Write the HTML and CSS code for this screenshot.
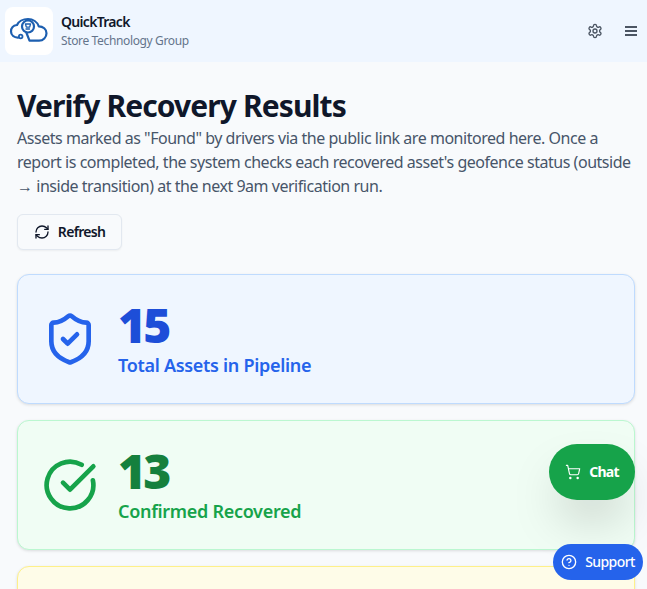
FILE: index.html
```html
<!DOCTYPE html>
<html lang="en">
<head>
<meta charset="utf-8">
<title>QuickTrack</title>
<link rel="stylesheet" href="styles.css">
</head>
<body>
<header class="topbar">
  <div class="brand">
    <div class="logo">
      <svg width="40" height="30" viewBox="0 0 40 30" fill="none" stroke="#1d5fb0" stroke-width="2.200" stroke-linecap="round" stroke-linejoin="round">
        <path d="M9.800 21.500C5 22 2 19 2 15.500c0-3.500 2.500-6 6-6.500C9.500 5.500 14 3 19 3c5 0 9.300 3 10.800 7.300 4.200 0 7.700 3 7.700 6.900 0 4-3.300 7.500-7.500 7.500H20.500L17.500 17"/>
        <circle cx="19" cy="10.500" r="6"/>
        <path d="M16.500 8h5l-.8 3.200h-3.400zM17 13h3.500" stroke-width="1.300"/>
        <circle cx="11.700" cy="20.500" r="1.800" stroke-width="1.800"/>
      </svg>
    </div>
    <div class="brand-text">
      <div class="brand-name">QuickTrack</div>
      <div class="brand-sub">Store Technology Group</div>
    </div>
  </div>
  <div class="top-actions">
    <svg class="gear" width="16" height="16" viewBox="0 0 24 24" fill="none" stroke="#4b5563" stroke-width="2" stroke-linecap="round" stroke-linejoin="round">
      <path d="M12.220 2h-.44a2 2 0 0 0-2 2v.18a2 2 0 0 1-1 1.730l-.43.25a2 2 0 0 1-2 0l-.15-.08a2 2 0 0 0-2.730.73l-.22.38a2 2 0 0 0 .73 2.730l.15.1a2 2 0 0 1 1 1.720v.51a2 2 0 0 1-1 1.740l-.15.09a2 2 0 0 0-.73 2.730l.22.38a2 2 0 0 0 2.730.73l.15-.08a2 2 0 0 1 2 0l.43.25a2 2 0 0 1 1 1.730V20a2 2 0 0 0 2 2h.44a2 2 0 0 0 2-2v-.18a2 2 0 0 1 1-1.730l.43-.25a2 2 0 0 1 2 0l.15.08a2 2 0 0 0 2.730-.73l.22-.39a2 2 0 0 0-.73-2.730l-.15-.08a2 2 0 0 1-1-1.740v-.5a2 2 0 0 1 1-1.740l.15-.09a2 2 0 0 0 .73-2.730l-.22-.38a2 2 0 0 0-2.730-.73l-.15.08a2 2 0 0 1-2 0l-.43-.25a2 2 0 0 1-1-1.730V4a2 2 0 0 0-2-2z"/>
      <circle cx="12" cy="12" r="3"/>
    </svg>
    <svg width="14" height="12" viewBox="0 0 14 12" fill="#4b5563"><rect x="1" y="1" width="12" height="2"/><rect x="1" y="5" width="12" height="2"/><rect x="1" y="9" width="12" height="2"/></svg>
  </div>
</header>
<main class="content">
  <h1 class="title">Verify Recovery Results</h1>
  <p class="intro">Assets marked as "Found" by drivers via the public link are monitored here. Once a report is completed, the system checks each recovered asset's geofence status (outside → inside transition) at the next 9am verification run.</p>
  <button class="refresh" type="button">
    <svg width="16" height="16" viewBox="0 0 24 24" fill="none" stroke="#0f172a" stroke-width="2" stroke-linecap="round" stroke-linejoin="round">
      <path d="M3 12a9 9 0 0 1 9-9 9.750 9.750 0 0 1 6.740 2.740L21 8"/><path d="M21 3v5h-5"/><path d="M21 12a9 9 0 0 1-9 9 9.750 9.750 0 0 1-6.740-2.740L3 16"/><path d="M8 16H3v5"/>
    </svg>
    <span class="btn-text">Refresh</span>
  </button>
  <section class="cards">
    <article class="card card-blue">
      <svg class="card-icon" width="56" height="56" viewBox="0 0 24 24" fill="none" stroke="#2563eb" stroke-width="2" stroke-linecap="round" stroke-linejoin="round">
        <path d="M20 13c0 5-3.500 7.500-7.660 8.950a1 1 0 0 1-.67-.010C7.500 20.500 4 18 4 13V6a1 1 0 0 1 1-1c2 0 4.500-1.200 6.240-2.720a1.170 1.170 0 0 1 1.520 0C14.510 3.810 17 5 19 5a1 1 0 0 1 1 1z"/>
        <path d="m9 12 2 2 4-4"/>
      </svg>
      <div class="card-body">
        <div class="num">15</div>
        <div class="label">Total Assets in Pipeline</div>
      </div>
    </article>
    <article class="card card-green">
      <svg class="card-icon" width="56" height="56" viewBox="0 0 24 24" fill="none" stroke="#16a34a" stroke-width="2" stroke-linecap="round" stroke-linejoin="round">
        <path d="M21.801 10A10 10 0 1 1 17 3.335"/>
        <path d="m9 11 3 3L22 4"/>
      </svg>
      <div class="card-body">
        <div class="num">13</div>
        <div class="label">Confirmed Recovered</div>
      </div>
    </article>
    <article class="card card-yellow"></article>
  </section>
</main>
<button class="fab-chat" type="button">
  <svg width="16" height="16" viewBox="0 0 24 24" fill="none" stroke="#fff" stroke-width="1.700" stroke-linecap="round" stroke-linejoin="round">
    <circle cx="8" cy="21" r="1"/><circle cx="19" cy="21" r="1"/><path d="M2.050 2.050h2l2.660 12.420a2 2 0 0 0 2 1.580h9.780a2 2 0 0 0 1.950-1.570l1.650-7.430H5.120"/>
  </svg>
  <span class="btn-text">Chat</span>
</button>
<button class="fab-support" type="button">
  <svg width="16" height="16" viewBox="0 0 24 24" fill="none" stroke="#fff" stroke-width="2" stroke-linecap="round" stroke-linejoin="round">
    <circle cx="12" cy="12" r="10"/><path d="M9.090 9a3 3 0 0 1 5.830 1c0 2-3 3-3 3"/><path d="M12 17h.01"/>
  </svg>
  <span class="btn-text">Support</span>
</button>
</body>
</html>
```
FILE: styles.css
```css
* { box-sizing: border-box; }
html, body { margin: 0; height: 100%; overflow: hidden; }
body { background: #f8fafc; color: #0f172a; font-family: "Noto Sans", sans-serif; }
.topbar { height: 62px; background: #eff6ff; display: flex; align-items: center; justify-content: space-between; padding: 0 9px 0 5px; }
.brand { display: flex; align-items: center; gap: 8px; }
.logo { width: 48px; height: 48px; background: #fff; border-radius: 8px; display: flex; align-items: center; justify-content: center; }
.brand-text { padding-bottom: 2px; }
.brand-name { font-size: 14px; font-weight: 600; line-height: 20px; letter-spacing: -.7px; color: #0f172a; }
.brand-sub { font-size: 12px; line-height: 16px; letter-spacing: -.36px; color: #64748b; margin-top: 1px; }
.top-actions { display: flex; align-items: center; gap: 21px; }
.content { padding: 24px 12px 0 17px; }
.title { margin: 0; font-size: 30px; line-height: 40px; font-weight: 700; letter-spacing: -.9px; color: #0f172a; }
.intro { margin: 0; width: 618px; font-size: 16px; line-height: 24px; letter-spacing: -.47px; color: #475569; }
.btn-text { padding-bottom: 2px; }
.refresh { margin-top: 16px; height: 36px; width: 105px; background: #f8fafc; border: 1px solid #e2e8f0; border-radius: 6px; box-shadow: 0 1px 2px rgba(0,0,0,.05); display: flex; align-items: center; justify-content: center; gap: 8px; font: 600 14px "Noto Sans", sans-serif; letter-spacing: -.7px; color: #0f172a; }
.cards { margin-top: 24px; display: flex; flex-direction: column; gap: 16px; }
.card { height: 130px; border: 1px solid; border-radius: 12px; box-shadow: 0 1px 3px rgba(0,0,0,.12); display: flex; align-items: center; padding: 0 24px; gap: 20px; }
.card-blue { background: #eff6ff; border-color: #bfdbfe; }
.card-green { background: #f0fdf4; border-color: #bbf7d0; }
.card-yellow { background: #fefce8; border-color: #fef08a; }
.num { font-size: 48px; line-height: 52px; font-weight: 900; letter-spacing: -3px; }
.card-blue .num { color: #1d4ed8; }
.card-green .num { color: #15803d; }
.label { font-size: 18px; line-height: 28px; font-weight: 600; letter-spacing: -.3px; }
.card-blue .label { color: #2563eb; }
.card-green .label { color: #16a34a; }
.fab-chat { position: absolute; left: 549px; top: 444px; width: 86px; height: 56px; border: 0; border-radius: 28px; background: #16a34a; color: #fff; box-shadow: 0 25px 50px -12px rgba(0,0,0,.25); display: flex; align-items: center; justify-content: center; gap: 8px; font: 700 14px "Noto Sans", sans-serif; letter-spacing: -.7px; }
.fab-support { position: absolute; left: 553px; top: 544px; width: 90px; height: 36px; border: 0; border-radius: 18px; background: #2563eb; color: #fff; display: flex; align-items: center; justify-content: center; gap: 8px; font: 500 14px "Noto Sans", sans-serif; letter-spacing: -.57px; }
```
